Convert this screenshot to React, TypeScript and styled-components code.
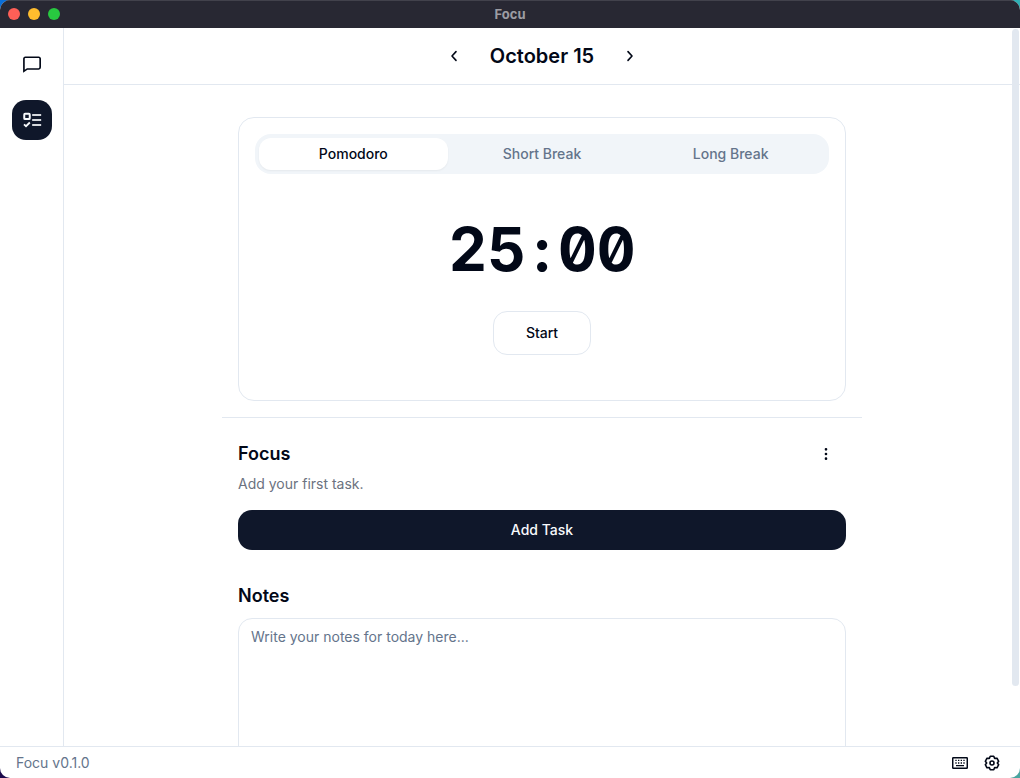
import React, { useState } from "react";
import styled, { createGlobalStyle } from "styled-components";

const GlobalStyle = createGlobalStyle`
  *, *::before, *::after { box-sizing: border-box; }
  body {
    margin: 0;
    font-family: Inter, "Liberation Sans", sans-serif;
    font-size: 14px;
    line-height: 20px;
    color: #020817;
    background:
      linear-gradient(#0a6fd8, #1c0a4c) left / 50% 100% no-repeat,
      linear-gradient(#2fb0b5, #4aa5a0) right / 50% 100% no-repeat;
  }
  button, textarea { font: inherit; color: inherit; }
`;

const Window = styled.div`
  display: flex;
  flex-direction: column;
  height: 100vh;
  border-radius: 10px;
  overflow: hidden;
  background: #fff;
`;

const TitleBar = styled.header`
  position: relative;
  display: flex;
  flex: none;
  align-items: center;
  justify-content: center;
  height: 28px;
  background: #282833;
  box-shadow: inset 0 1px #42424c;
  color: #9d9da3;
  font-size: 13px;
  font-weight: 700;
`;

const TrafficLights = styled.div`
  position: absolute;
  left: 8px;
  display: flex;
  gap: 8px;
`;

const Light = styled.button<{ $color: string }>`
  width: 12px;
  height: 12px;
  padding: 0;
  border: 0;
  border-radius: 50%;
  background: ${(p) => p.$color};
`;

const Body = styled.div`
  display: flex;
  flex: 1;
  min-height: 0;
`;

const Sidebar = styled.nav`
  display: flex;
  flex: none;
  flex-direction: column;
  align-items: center;
  gap: 16px;
  width: 64px;
  padding-top: 16px;
  border-right: 1px solid #e2e8f0;
`;

const NavButton = styled.button<{ $active?: boolean }>`
  display: grid;
  place-items: center;
  width: 40px;
  height: 40px;
  padding: 0;
  border: 0;
  border-radius: 14px;
  background: ${(p) => (p.$active ? "#0f172a" : "transparent")};
  color: ${(p) => (p.$active ? "#f8fafc" : "#020817")};
`;

const Main = styled.main`
  position: relative;
  flex: 1;
  min-width: 0;
  overflow: hidden;
`;

const ScrollThumb = styled.div`
  position: absolute;
  top: 1px;
  right: 1px;
  width: 7px;
  height: 91.5%;
  border-radius: 4px;
  background: #e2e8f0;
`;

const DateBar = styled.div`
  display: flex;
  align-items: center;
  justify-content: center;
  gap: 16px;
  height: 57px;
  border-bottom: 1px solid #e2e8f0;
`;

const DateTitle = styled.h1`
  margin: 0;
  font-size: 20px;
  line-height: 28px;
  font-weight: 600;
`;

const IconButton = styled.button`
  display: grid;
  place-items: center;
  width: 40px;
  height: 40px;
  padding: 0;
  border: 0;
  background: transparent;
`;

const Content = styled.div`
  max-width: 640px;
  margin: 0 auto;
  padding-top: 32px;
`;

const TimerSection = styled.section`
  padding: 0 16px 16px;
  border-bottom: 1px solid #e2e8f0;
`;

const TimerCard = styled.div`
  display: flex;
  flex-direction: column;
  align-items: center;
  padding: 16px 16px 45px;
  border: 1px solid #e2e8f0;
  border-radius: 16px;
`;

const TabList = styled.div`
  display: grid;
  grid-template-columns: repeat(3, 1fr);
  align-self: stretch;
  padding: 4px;
  border-radius: 16px;
  background: #f1f5f9;
`;

const Tab = styled.button<{ $active: boolean }>`
  height: 32px;
  padding: 0;
  border: 0;
  border-radius: 12px;
  font-weight: 500;
  background: ${(p) => (p.$active ? "#fff" : "transparent")};
  color: ${(p) => (p.$active ? "#020817" : "#64748b")};
  box-shadow: ${(p) => (p.$active ? "0 1px 2px rgba(0, 0, 0, 0.05)" : "none")};
`;

const Clock = styled.div`
  margin: 45px 0 32px;
  font-size: 60px;
  line-height: 60px;
  font-weight: 700;
  font-variant-numeric: tabular-nums slashed-zero;
`;

const Colon = styled.span`
  display: inline-block;
  width: 32px;
  text-align: center;
`;

const StartButton = styled.button`
  height: 44px;
  padding: 0 32px;
  border: 1px solid #e2e8f0;
  border-radius: 14px;
  background: #fff;
  font-weight: 500;
`;

const Section = styled.section`
  padding: 16px 16px 0;
`;

const SectionHead = styled.div`
  display: flex;
  align-items: center;
  justify-content: space-between;
  height: 40px;
`;

const SectionTitle = styled.h2`
  margin: 0;
  font-size: 18px;
  line-height: 28px;
  font-weight: 600;
`;

const Hint = styled.p`
  margin: 0 0 16px;
  color: #6b7280;
`;

const AddButton = styled.button`
  display: block;
  width: 100%;
  height: 40px;
  border: 0;
  border-radius: 14px;
  background: #0f172a;
  color: #f8fafc;
  font-weight: 500;
`;

const NotesSection = styled.section`
  padding: 32px 16px 0;
`;

const NotesArea = styled.textarea`
  display: block;
  width: 100%;
  height: 200px;
  margin-top: 8px;
  padding: 8px 12px;
  border: 1px solid #e2e8f0;
  border-radius: 14px;
  background: #fff;
  resize: none;
  outline: none;
  &::placeholder { color: #64748b; opacity: 1; }
`;

const StatusBar = styled.footer`
  display: flex;
  flex: none;
  align-items: center;
  justify-content: space-between;
  height: 32px;
  padding: 0 20px 0 16px;
  border-top: 1px solid #e2e8f0;
  color: #64748b;
`;

const StatusActions = styled.div`
  display: flex;
  gap: 16px;
  color: #020817;
`;

const StatusButton = styled.button`
  display: grid;
  place-items: center;
  width: 16px;
  height: 16px;
  padding: 0;
  border: 0;
  background: transparent;
`;

type IconProps = { d: string; size: number; weight?: number };

const Icon = ({ d, size, weight = 2 }: IconProps) => (
  <svg width={size} height={size} viewBox="0 0 24 24" fill="none" stroke="currentColor" strokeWidth={weight} strokeLinecap="round" strokeLinejoin="round" aria-hidden="true">
    <path d={d} />
  </svg>
);

const SolidIcon = ({ d, size }: IconProps) => (
  <svg width={size} height={size} viewBox="0 0 24 24" fill="currentColor" fillRule="evenodd" aria-hidden="true">
    <path d={d} />
  </svg>
);

const TasksIcon = () => (
  <svg width="20" height="20" viewBox="0 0 24 24" fill="none" stroke="currentColor" aria-hidden="true">
    <rect x="2.700" y="4.600" width="6.600" height="6.200" rx="1" strokeWidth="2.400" />
    <path d="M2.400 17.200L4.800 19.400L9.400 15" strokeWidth="2.200" />
    <path d="M12.200 6H23M12.200 12H23M12.200 18H23" strokeWidth="2.200" opacity="0.850" />
  </svg>
);

const CHAT = "M4 3H20A3 3 0 0 1 22.800 5.500V16A3 3 0 0 1 20 19H6.500L1.300 22.500V5.500A3 3 0 0 1 4 3ZM4 4.800A1 1 0 0 0 3.300 5.500V19L6 17H20A1 1 0 0 0 20.800 16V5.500A1 1 0 0 0 20 4.800Z";
const KEYBOARD = "M2 3H22A2 2 0 0 1 24 5V19A2 2 0 0 1 22 21H2A2 2 0 0 1 0 19V5A2 2 0 0 1 2 3ZM2.200 5.200V18.800H21.800V5.200ZM5 7H7V9H5ZM9 7H11V9H9ZM13 7H15V9H13ZM17 7H19V9H17ZM5 11H7V13H5ZM9 11H11V13H9ZM13 11H15V13H13ZM17 11H19V13H17ZM6 15H18V17H6Z";
const GEAR = "M9.400 1.800H14.600L16 5.100L19.500 4.800L22 9.400L20 12L22 14.600L19.500 19.200L16 18.900L14.600 22.200H9.400L8 18.900L4.500 19.200L2 14.600L4 12L2 9.400L4.500 4.800L8 5.100ZM12 9a3 3 0 1 0 0 6a3 3 0 1 0 0-6Z";
const DOTS = "M12 3a2 2 0 1 0 0 4a2 2 0 1 0 0-4ZM12 10a2 2 0 1 0 0 4a2 2 0 1 0 0-4ZM12 17a2 2 0 1 0 0 4a2 2 0 1 0 0-4Z";

const MODES = ["Pomodoro", "Short Break", "Long Break"];

export default function App() {
  const [mode, setMode] = useState(MODES[0]);
  return (
    <>
      <GlobalStyle />
      <Window>
        <TitleBar>
          <TrafficLights>
            <Light $color="#ff5f57" aria-label="Close" />
            <Light $color="#febc2e" aria-label="Minimize" />
            <Light $color="#28c840" aria-label="Zoom" />
          </TrafficLights>
          Focu
        </TitleBar>
        <Body>
          <Sidebar>
            <NavButton aria-label="Chat"><SolidIcon d={CHAT} size={20} /></NavButton>
            <NavButton $active aria-label="Tasks"><TasksIcon /></NavButton>
          </Sidebar>
          <Main>
            <DateBar>
              <IconButton aria-label="Previous day"><Icon d="M15 5.500L9 12L15 18.500" size={16} weight={2.4} /></IconButton>
              <DateTitle>October 15</DateTitle>
              <IconButton aria-label="Next day"><Icon d="M9 5.500L15 12L9 18.500" size={16} weight={2.4} /></IconButton>
            </DateBar>
            <Content>
              <TimerSection>
                <TimerCard>
                  <TabList role="tablist">
                    {MODES.map((m) => (
                      <Tab key={m} role="tab" aria-selected={m === mode} $active={m === mode} onClick={() => setMode(m)}>{m}</Tab>
                    ))}
                  </TabList>
                  <Clock>25<Colon>:</Colon>00</Clock>
                  <StartButton>Start</StartButton>
                </TimerCard>
              </TimerSection>
              <Section>
                <SectionHead>
                  <SectionTitle>Focus</SectionTitle>
                  <IconButton aria-label="Task options"><SolidIcon d={DOTS} size={16} /></IconButton>
                </SectionHead>
                <Hint>Add your first task.</Hint>
                <AddButton>Add Task</AddButton>
              </Section>
              <NotesSection>
                <SectionTitle as="label" htmlFor="notes">Notes</SectionTitle>
                <NotesArea id="notes" placeholder="Write your notes for today here..." />
              </NotesSection>
            </Content>
            <ScrollThumb />
          </Main>
        </Body>
        <StatusBar>
          <span>Focu v0.1.0</span>
          <StatusActions>
            <StatusButton aria-label="Keyboard shortcuts"><SolidIcon d={KEYBOARD} size={16} /></StatusButton>
            <StatusButton aria-label="Settings"><Icon d={GEAR} size={16} weight={2.4} /></StatusButton>
          </StatusActions>
        </StatusBar>
      </Window>
    </>
  );
}
